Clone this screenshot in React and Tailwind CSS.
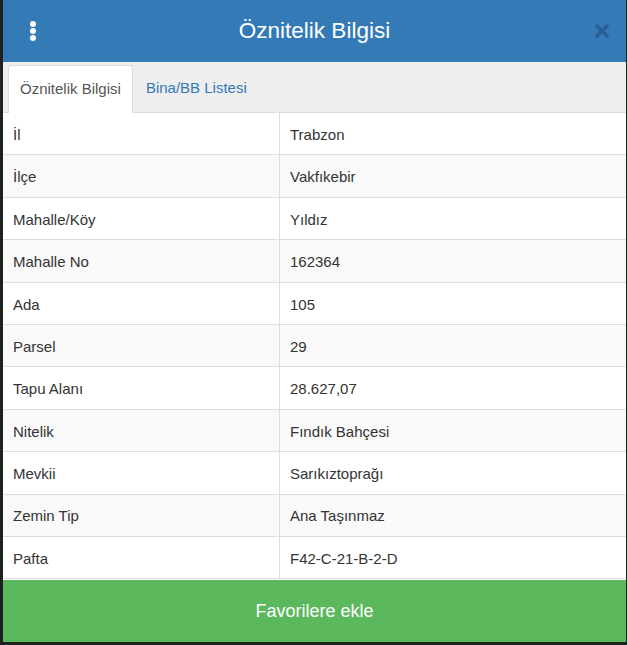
import React from 'react';

const rows = [
  ['İl', 'Trabzon'],
  ['İlçe', 'Vakfıkebir'],
  ['Mahalle/Köy', 'Yıldız'],
  ['Mahalle No', '162364'],
  ['Ada', '105'],
  ['Parsel', '29'],
  ['Tapu Alanı', '28.627,07'],
  ['Nitelik', 'Fındık Bahçesi'],
  ['Mevkii', 'Sarıkıztoprağı'],
  ['Zemin Tip', 'Ana Taşınmaz'],
  ['Pafta', 'F42-C-21-B-2-D'],
];

const App = () => {
  return (
    <div className="w-[627px] h-[645px] bg-[#1c231c] overflow-hidden font-['Liberation_Sans']">
      <div className="ml-[3px] w-[623px] h-[642px] flex flex-col bg-white">
        {/* header */}
        <div className="h-[62px] bg-[#337ab7] grid grid-cols-[1fr_auto_1fr] items-center px-[20px]">
          <svg width="14" height="22" viewBox="0 0 14 22" className="text-white ml-[3px]">
            <circle cx="7" cy="4" r="3" fill="currentColor" />
            <circle cx="7" cy="11" r="3" fill="currentColor" />
            <circle cx="7" cy="18" r="3" fill="currentColor" />
          </svg>
          <h1 className="text-white text-[22.5px] leading-none">Öznitelik Bilgisi</h1>
          <svg width="14" height="14" viewBox="0 0 14 14" className="justify-self-end mr-[-3px]">
            <path d="M2 2 L12 12 M12 2 L2 12" stroke="#2a5f95" strokeWidth="3.6" strokeLinecap="round" />
          </svg>
        </div>

        {/* tabs */}
        <div className="h-[51px] bg-[#eeeeee] flex items-end px-[5px] border-b border-[#dddddd]">
          <div className="h-[48px] bg-white border border-[#dddddd] border-b-0 rounded-t-[3px] px-[11px] flex items-center text-[15px] text-[#555555] mb-[-1px]">
            Öznitelik Bilgisi
          </div>
          <div className="h-[48px] px-[13px] flex items-center text-[15px] text-[#337ab7]">
            Bina/BB Listesi
          </div>
        </div>

        {/* table */}
        <div className="flex-1 flex flex-col">
          {rows.map(([label, value], i) => (
            <div
              key={label}
              className={`grid grid-cols-[277px_1fr] h-[42.4px] border-b border-[#dddddd] text-[15px] text-[#333333] ${i % 2 === 1 ? 'bg-[#f9f9f9]' : 'bg-white'}`}
            >
              <div className="flex items-center pl-[10px] pt-[3px] border-r border-[#dddddd]">{label}</div>
              <div className="flex items-center pl-[10px] pt-[3px]">{value}</div>
            </div>
          ))}
        </div>

        <button className="h-[62px] bg-[#5cb85c] text-white text-[18px] w-full">
          Favorilere ekle
        </button>
      </div>
    </div>
  );
};

export default App;
